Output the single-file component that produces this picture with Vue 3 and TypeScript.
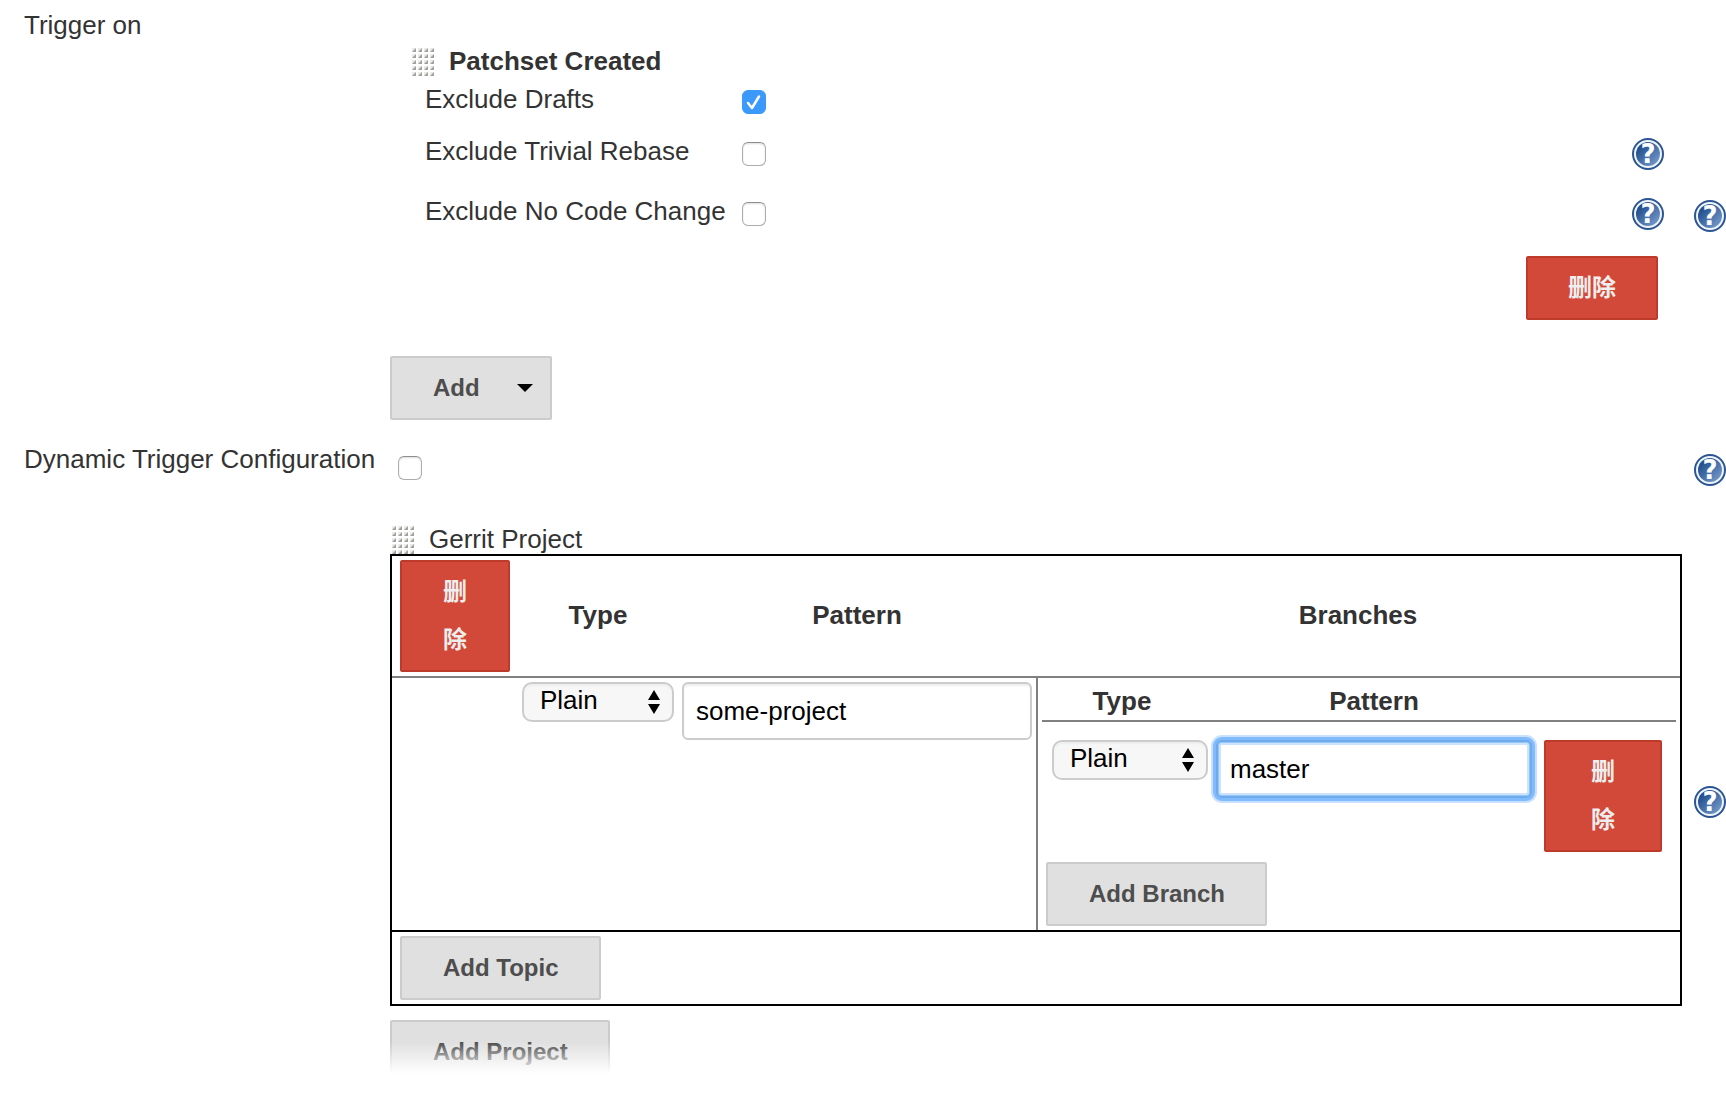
<script setup lang="ts">
import { defineComponent, h, reactive, ref } from 'vue'

interface Exclusion {
  id: string
  label: string
  checked: boolean
  help: boolean
}

const exclusions = reactive<Exclusion[]>([
  { id: 'drafts', label: 'Exclude Drafts', checked: true, help: false },
  { id: 'rebase', label: 'Exclude Trivial Rebase', checked: false, help: true },
  { id: 'nocode', label: 'Exclude No Code Change', checked: false, help: true },
])
const dynamicTrigger = ref(false)
const projectType = ref('Plain')
const projectPattern = ref('some-project')
const branchType = ref('Plain')
const branchPattern = ref('master')
const types = ['Plain', 'Path', 'RegExp']

const HelpIcon = defineComponent({
  setup: () => () =>
    h('svg', { width: 32, height: 32, viewBox: '0 0 32 32', style: 'display:block', 'aria-hidden': 'true' }, [
      h('circle', { cx: 16, cy: 16, r: 15, fill: '#f0f5fb', stroke: '#2c5594', 'stroke-width': 2 }),
      h('circle', { cx: 16, cy: 16, r: 12, fill: 'url(#help-fill)' }),
      h(
        'text',
        {
          x: 16,
          y: 25,
          'text-anchor': 'middle',
          'font-family': '"DejaVu Sans", sans-serif',
          'font-weight': 700,
          'font-size': 26,
          fill: '#fff',
        },
        '?',
      ),
    ]),
})

const DragHandle = defineComponent({
  setup: () => () =>
    h(
      'svg',
      { width: 22, height: 28, viewBox: '0 0 22 28', style: 'display:block', 'aria-hidden': 'true' },
      Array.from({ length: 20 }, (_, i) => {
        const x = (i % 4) * 6
        const y = Math.floor(i / 4) * 6
        return h('g', [
          h('rect', { x, y, width: 4, height: 4, fill: '#ebebe8' }),
          h('path', { d: `M${x + 4} ${y}v4h-4z`, fill: '#a2a29c' }),
        ])
      }),
    ),
})
</script>

<template>
  <form class="config" @submit.prevent>
    <svg class="defs" width="0" height="0" aria-hidden="true">
      <defs>
        <linearGradient id="help-fill" x1="0" y1="0" x2="1" y2="1">
          <stop offset="0.2" stop-color="#24508f" />
          <stop offset="1" stop-color="#7fa3d3" />
        </linearGradient>
      </defs>
    </svg>

    <section class="row">
      <div class="name first">Trigger on</div>
      <div class="setting">
        <div class="event">
          <div class="title"><DragHandle /><b>Patchset Created</b></div>
          <div v-for="e in exclusions" :key="e.id" class="option">
            <label :for="e.id">{{ e.label }}</label>
            <input :id="e.id" v-model="e.checked" class="check" type="checkbox" />
            <a v-if="e.help" class="help" href="#" :aria-label="'Help: ' + e.label"><HelpIcon /></a>
          </div>
          <div class="remove"><button class="btn danger" type="button">删除</button></div>
        </div>
        <button class="btn menu" type="button">
          Add
          <svg width="16" height="8" viewBox="0 0 16 8" aria-hidden="true"><path d="M0 0h16L8 8z" fill="#000" /></svg>
        </button>
      </div>
      <a class="help" href="#" aria-label="Help: Trigger on"><HelpIcon /></a>
    </section>

    <section class="row dynamic">
      <label class="name" for="dynamic">Dynamic Trigger Configuration</label>
      <div class="setting"><input id="dynamic" v-model="dynamicTrigger" class="check" type="checkbox" /></div>
      <a class="help" href="#" aria-label="Help: Dynamic Trigger Configuration"><HelpIcon /></a>
    </section>

    <section class="row project">
      <div class="name"></div>
      <div class="setting">
        <div class="title"><DragHandle /><span>Gerrit Project</span></div>
        <table class="projects">
          <colgroup>
            <col class="c-remove" />
            <col class="c-type" />
            <col class="c-pattern" />
            <col />
          </colgroup>
          <thead>
            <tr>
              <th class="corner"><button class="btn danger" type="button">删除</button></th>
              <th>Type</th>
              <th>Pattern</th>
              <th>Branches</th>
            </tr>
          </thead>
          <tbody>
            <tr>
              <td></td>
              <td>
                <div class="select">
                  <select v-model="projectType" aria-label="Project type">
                    <option v-for="t in types" :key="t">{{ t }}</option>
                  </select>
                  <svg width="12" height="24" viewBox="0 0 12 24" aria-hidden="true"><path d="M0 10 6 0l6 10zM0 14h12L6 24z" /></svg>
                </div>
              </td>
              <td><input v-model="projectPattern" class="text" type="text" aria-label="Project pattern" /></td>
              <td class="branches">
                <table>
                  <colgroup>
                    <col class="c-type" />
                    <col />
                    <col class="c-end" />
                  </colgroup>
                  <thead>
                    <tr>
                      <th>Type</th>
                      <th>Pattern</th>
                      <th></th>
                    </tr>
                  </thead>
                  <tbody>
                    <tr>
                      <td colspan="3">
                        <div class="branch">
                          <div class="select">
                            <select v-model="branchType" aria-label="Branch type">
                              <option v-for="t in types" :key="t">{{ t }}</option>
                            </select>
                            <svg width="12" height="24" viewBox="0 0 12 24" aria-hidden="true"><path d="M0 10 6 0l6 10zM0 14h12L6 24z" /></svg>
                          </div>
                          <input v-model="branchPattern" class="text active" type="text" aria-label="Branch pattern" />
                          <button class="btn danger" type="button">删除</button>
                        </div>
                      </td>
                    </tr>
                  </tbody>
                </table>
                <button class="btn add-branch" type="button">Add Branch</button>
              </td>
            </tr>
          </tbody>
          <tfoot>
            <tr>
              <td colspan="4"><button class="btn" type="button">Add Topic</button></td>
            </tr>
          </tfoot>
        </table>
        <button class="btn add-project" type="button">Add Project</button>
      </div>
      <a class="help" href="#" aria-label="Help: Gerrit Project"><HelpIcon /></a>
    </section>
    <div class="fade"></div>
  </form>
</template>

<style>
body {
  margin: 0;
  background: #fff;
}
</style>

<style scoped>
.config,
.config * {
  box-sizing: border-box;
}
.config {
  position: relative;
  min-height: 100vh;
  overflow: hidden;
  color: #333;
  font: 26px/30px "Liberation Sans", "Noto Sans CJK SC", sans-serif;
}
.defs {
  position: absolute;
}
.row {
  display: grid;
  grid-template-columns: 366px minmax(0, 1fr) 32px;
  column-gap: 12px;
  padding-left: 12px;
  align-items: center;
}
.name {
  align-self: start;
  padding: 12px 0 0 12px;
  white-space: nowrap;
}
.name.first {
  padding-top: 10px;
}
.help {
  display: block;
  width: 32px;
  height: 32px;
}
.title {
  display: flex;
  align-items: flex-start;
  gap: 15px;
}
.title svg {
  margin-top: 2px;
}
.event {
  padding: 46px 12px 36px 22px;
}
.event .title {
  height: 38px;
}
.option {
  display: grid;
  grid-template-columns: 317px 1fr 32px;
  align-items: start;
  height: 60px;
  padding: 0 6px 0 13px;
}
.option:nth-child(2) {
  height: 52px;
}
.option .check {
  margin-top: 6px;
}
.option .help {
  margin-top: 2px;
}
.remove {
  display: flex;
  justify-content: flex-end;
  padding-right: 12px;
}
.check {
  appearance: none;
  display: block;
  width: 24px;
  height: 24px;
  margin: 0;
  border: 1px solid #adadad;
  border-top-color: #8e8e8e;
  border-radius: 6px;
  background: #fff;
  box-shadow: inset 0 1px 2px #ddd;
}
.check:checked {
  border-color: #3b99fc;
  background: #3b99fc url("data:image/svg+xml,%3Csvg xmlns='http://www.w3.org/2000/svg' viewBox='0 0 44 44'%3E%3Cpath d='M10 24 18 34 32 11' fill='none' stroke='white' stroke-width='5' stroke-linecap='round' stroke-linejoin='round'/%3E%3C/svg%3E");
  box-shadow: none;
}
.btn {
  display: block;
  margin: 0;
  padding: 6px 40px 6px 41px;
  border: 2px solid #ccc;
  border-radius: 2px;
  background: #e0e0e0;
  color: #4d4d4d;
  font: bold 24px/48px "Liberation Sans", "Noto Sans CJK SC", sans-serif;
}
.danger {
  padding: 6px 40px;
  border-color: #be3a2b;
  background: #d24939;
  color: #eee;
}
.menu {
  display: flex;
  align-items: center;
  gap: 37px;
  margin-bottom: 12px;
  padding-right: 17px;
}
.dynamic {
  height: 76px;
}
.dynamic .check {
  margin-left: 8px;
  margin-top: 22px;
}
.dynamic .setting {
  align-self: start;
  padding-top: 2px;
}
.project .setting {
  padding: 16px 0 12px;
}
.project .title {
  height: 30px;
  padding-left: 2px;
  overflow: hidden;
}
table {
  width: 100%;
  table-layout: fixed;
  border-spacing: 0;
}
td,
th {
  padding: 4px;
  text-align: center;
  vertical-align: top;
}
th {
  vertical-align: middle;
}
.projects {
  border: 2px solid #000;
}
.c-remove {
  width: 126px;
}
.c-type {
  width: 160px;
}
.c-pattern {
  width: 358px;
}
.c-end {
  width: 130px;
}
.projects > thead th {
  padding-bottom: 6px;
  border-bottom: 2px solid #808080;
}
.projects > thead .corner {
  padding: 4px 8px;
}
.corner .btn {
  width: 110px;
}
.projects > tfoot td {
  padding: 4px 8px;
  border-top: 2px solid #000;
}
.projects > tbody > tr > .branches {
  border-left: 2px solid #808080;
}
.branches td {
  padding: 18px 14px 10px 10px;
}
.branches th {
  height: 40px;
  padding: 0;
  border-bottom: 2px solid #808080;
}
.branch {
  display: grid;
  grid-template-columns: 156px minmax(0, 1fr) 118px;
  align-items: start;
}
.branch .text {
  width: auto;
  margin: 0 12px 0 8px;
}
.add-branch {
  margin-left: 4px;
}
.add-project {
  margin-top: 14px;
}
.select {
  position: relative;
}
select {
  appearance: none;
  display: block;
  width: 100%;
  height: 40px;
  padding: 0 32px 4px 16px;
  border: 2px solid #ccc;
  border-radius: 10px;
  background: #f7f7f7;
  color: #000;
  font: inherit;
  box-shadow: inset 0 2px 2px #eee;
}
.select svg {
  position: absolute;
  top: 8px;
  right: 14px;
  pointer-events: none;
}
.text {
  display: block;
  width: 100%;
  height: 58px;
  padding: 0 12px;
  border: 2px solid #ccc;
  border-radius: 6px;
  background: #fff;
  color: #000;
  font: inherit;
  box-shadow: inset 0 2px 2px #eee;
}
.text.active {
  border-color: #6eabeb;
  outline: none;
  box-shadow: 0 0 0 3px #80bbfd, 0 0 0 5px #c9e1fe, inset 0 0 0 1px #97c5f8, inset 0 0 0 3px #cce3ff;
}
.fade {
  position: absolute;
  right: 0;
  bottom: 0;
  left: 0;
  height: 56px;
  background: linear-gradient(rgba(255, 255, 255, 0), #fff 32px);
  pointer-events: none;
}
</style>
